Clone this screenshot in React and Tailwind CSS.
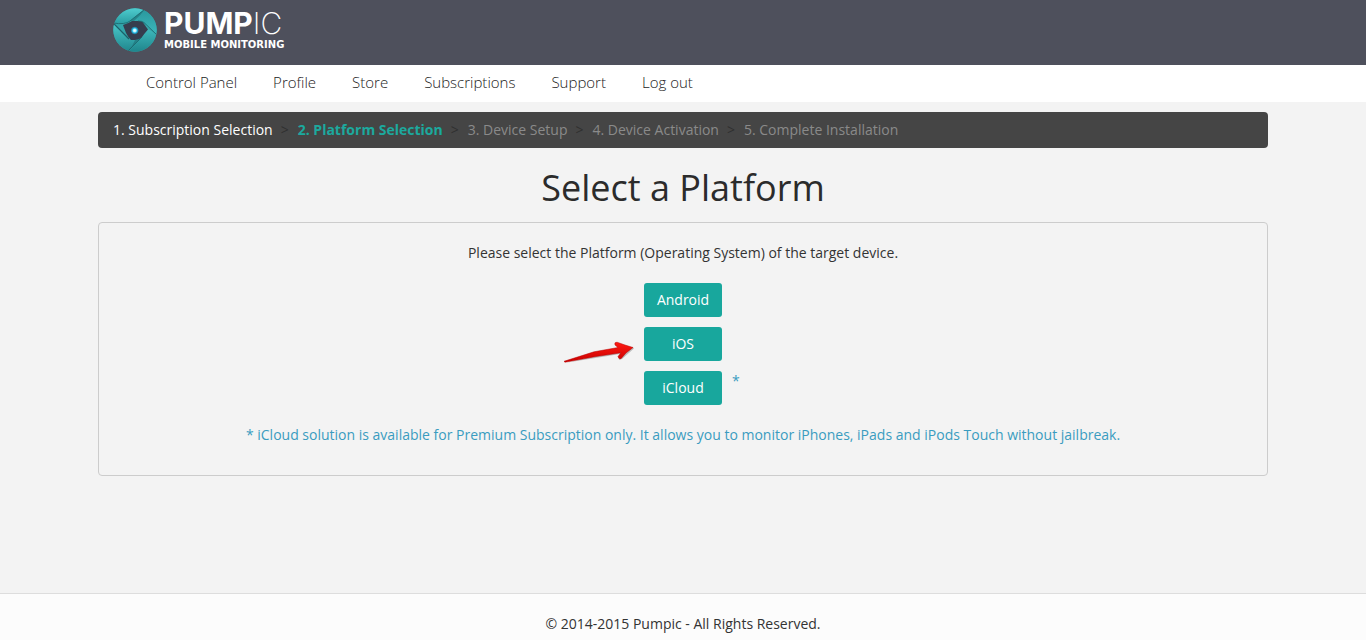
const navItems = ["Control Panel", "Profile", "Store", "Subscriptions", "Support", "Log out"];

const steps = [
  { label: "1. Subscription Selection", style: "text-white" },
  { label: "2. Platform Selection", style: "font-bold text-[#1ca99e]" },
  { label: "3. Device Setup", style: "text-[#8a8a8a]" },
  { label: "4. Device Activation", style: "text-[#8a8a8a]" },
  { label: "5. Complete Installation", style: "text-[#8a8a8a]" },
];

function LogoMark() {
  return (
    <svg viewBox="0 0 44 44" className="size-11 shrink-0" aria-hidden="true">
      <defs>
        <linearGradient id="top" x1="0" y1="0" x2="0" y2="1">
          <stop offset="0" stopColor="#4fcdcf" />
          <stop offset="1" stopColor="#2b9ea3" />
        </linearGradient>
        <linearGradient id="left" x1="0" y1="0" x2="0" y2="1">
          <stop offset="0" stopColor="#4bcacc" />
          <stop offset="1" stopColor="#1f858b" />
        </linearGradient>
        <linearGradient id="right" x1="0" y1="0" x2="0" y2="1">
          <stop offset="0" stopColor="#2a979c" />
          <stop offset="1" stopColor="#3cb9bd" />
        </linearGradient>
        <linearGradient id="bottom" x1="0" y1="0" x2="0" y2="1">
          <stop offset="0" stopColor="#45c4c7" />
          <stop offset="1" stopColor="#1f858b" />
        </linearGradient>
        <radialGradient id="glow">
          <stop offset="0" stopColor="#ffffff" />
          <stop offset="0.35" stopColor="#b5f4ff" />
          <stop offset="0.6" stopColor="#18b6e6" />
          <stop offset="1" stopColor="#18b6e6" stopOpacity="0" />
        </radialGradient>
        <clipPath id="round">
          <circle cx="22" cy="22" r="21.7" />
        </clipPath>
      </defs>
      <g clipPath="url(#round)">
        <rect width="44" height="44" fill="#31a5aa" />
        <path d="M0 0 H32 V1 L17 13 Q12 16 0 15Z" fill="url(#top)" />
        <path d="M0 15 L16 31 L25 32 L16 43 L0 44Z" fill="url(#left)" />
        <path d="M32 1 H44 V27 L32 16 Q29 13 24 13 H17Z" fill="url(#right)" />
        <path d="M32 16 L44 27 V44 H15 L29 29 L34 21Z" fill="url(#bottom)" />
        <path d="M32 1 L17 13 H21 Q28 7 32 1Z" fill="#15555c" opacity="0.4" />
        <path d="M15 43 L29 29 L22 32 Q20 38 15 43Z" fill="#15555c" opacity="0.4" />
        <path d="M44 27 L30 14 L34 21 Q38 22 44 27Z" fill="#15555c" opacity="0.2" />
        <path d="M10 17 Q16 15 19 13 H26 Q30 13 31 16 L35 21.500 Q31 26 29 29 Q26 32 22 32 H18 Q15 29 13 25 Z" fill="#363d4e" />
        <path d="M0 15 L16 31" fill="none" stroke="#1c5f67" strokeWidth="1.200" />
        <path d="M44 27 L31 14.500 Q29 13 25 13" fill="none" stroke="#1c646b" strokeWidth="0.800" />
        <path d="M0 15 Q12 17 17 13 L32 1" fill="none" stroke="#1c646b" strokeWidth="0.800" />
        <path d="M15 43 L29 29" fill="none" stroke="#1c646b" strokeWidth="0.800" />
      </g>
      <circle cx="21.700" cy="22.500" r="4.200" fill="url(#glow)" />
    </svg>
  );
}

function Arrow() {
  return (
    <svg viewBox="0 0 72 24" className="absolute right-full top-3 mr-2 h-6 w-18" aria-hidden="true">
      <defs>
        <linearGradient id="red" x1="0" y1="0" x2="0" y2="1">
          <stop offset="0" stopColor="#ff1a12" />
          <stop offset="1" stopColor="#c90000" />
        </linearGradient>
      </defs>
      <path d="M2 23.800 L56 15 L55 21 L58 20 L70 9.500 L69 8Z" fill="#555" opacity="0.35" />
      <path d="M0 22.300 L30 12.800 L54 8.500 L51 6 Q50 3 53 3.200 L61 6 L69 8.500 L62 14 L57 19.700 Q54.500 20.500 54 17.500 L57 13.800 L32 17.500 L1 23.200Z" fill="url(#red)" stroke="#b50000" strokeWidth="0.500" />
    </svg>
  );
}

const buttonStyle =
  "h-[34px] w-full cursor-pointer rounded-[3px] bg-[#18a79d] text-sm font-medium text-white hover:bg-[#12948b]";

export default function App() {
  return (
    <div className="flex min-h-screen flex-col bg-[#f3f3f3] font-['Open_Sans',sans-serif] text-sm leading-5 text-[#333]">
      <header className="bg-[#4e505c]">
        <div className="mx-auto flex h-[65px] max-w-[1170px] items-start px-[15px] pt-2">
          <a href="#home" className="flex items-start gap-[7px] text-white">
            <LogoMark />
            <span className="flex flex-col">
              <span className="font-[Inter,sans-serif] text-[30px] leading-[31px] font-bold">
                PUMP<span className="font-extralight">IC</span>
              </span>
              <span className="font-['DejaVu_Sans',sans-serif] text-[10px] leading-[11px] font-bold">
                MOBILE MONITORING
              </span>
            </span>
          </a>
        </div>
      </header>

      <nav className="bg-white">
        <ul className="mx-auto flex h-[37px] max-w-[1170px] items-start gap-9 px-12 pt-[7px] text-[15px] font-light text-[#222]">
          {navItems.map((item) => (
            <li key={item}>
              <a href="#nav">{item}</a>
            </li>
          ))}
        </ul>
      </nav>

      <main className="mx-auto w-full max-w-[1170px] flex-1 pt-[10px]">
        <ol className="flex items-center rounded bg-[#454545] px-[15px] py-2">
          {steps.map((step, i) => (
            <li key={step.label} className="flex items-center">
              {i > 0 && <span className="pr-[9px] pl-2 text-[#303030]">&gt;</span>}
              <span className={step.style}>{step.label}</span>
            </li>
          ))}
        </ol>

        <h1 className="mt-5 mb-[14px] text-center text-4xl leading-10 text-[#2b2b2b]">Select a Platform</h1>

        <section className="flex flex-col items-center rounded border border-[#ccc] px-5 pt-5 pb-[30px] text-center">
          <p>Please select the Platform (Operating System) of the target device.</p>
          <div className="mt-5 flex w-[78px] flex-col gap-[10px]">
            <button type="button" className={buttonStyle}>Android</button>
            <div className="relative">
              <Arrow />
              <button type="button" className={buttonStyle}>iOS</button>
            </div>
            <div className="relative">
              <button type="button" className={buttonStyle}>iCloud</button>
              <span className="absolute top-0 left-full ml-[10px] text-[#3a9cc0]">*</span>
            </div>
          </div>
          <p className="mt-5 text-[#3a9cc0]">
            * iCloud solution is available for Premium Subscription only. It allows you to monitor iPhones, iPads and iPods Touch without jailbreak.
          </p>
        </section>
      </main>

      <footer className="border-t border-[#ddd] bg-[#fcfcfc] pt-5 pb-[6px] text-center">
        <p>© 2014-2015 Pumpic - All Rights Reserved.</p>
      </footer>
    </div>
  );
}
